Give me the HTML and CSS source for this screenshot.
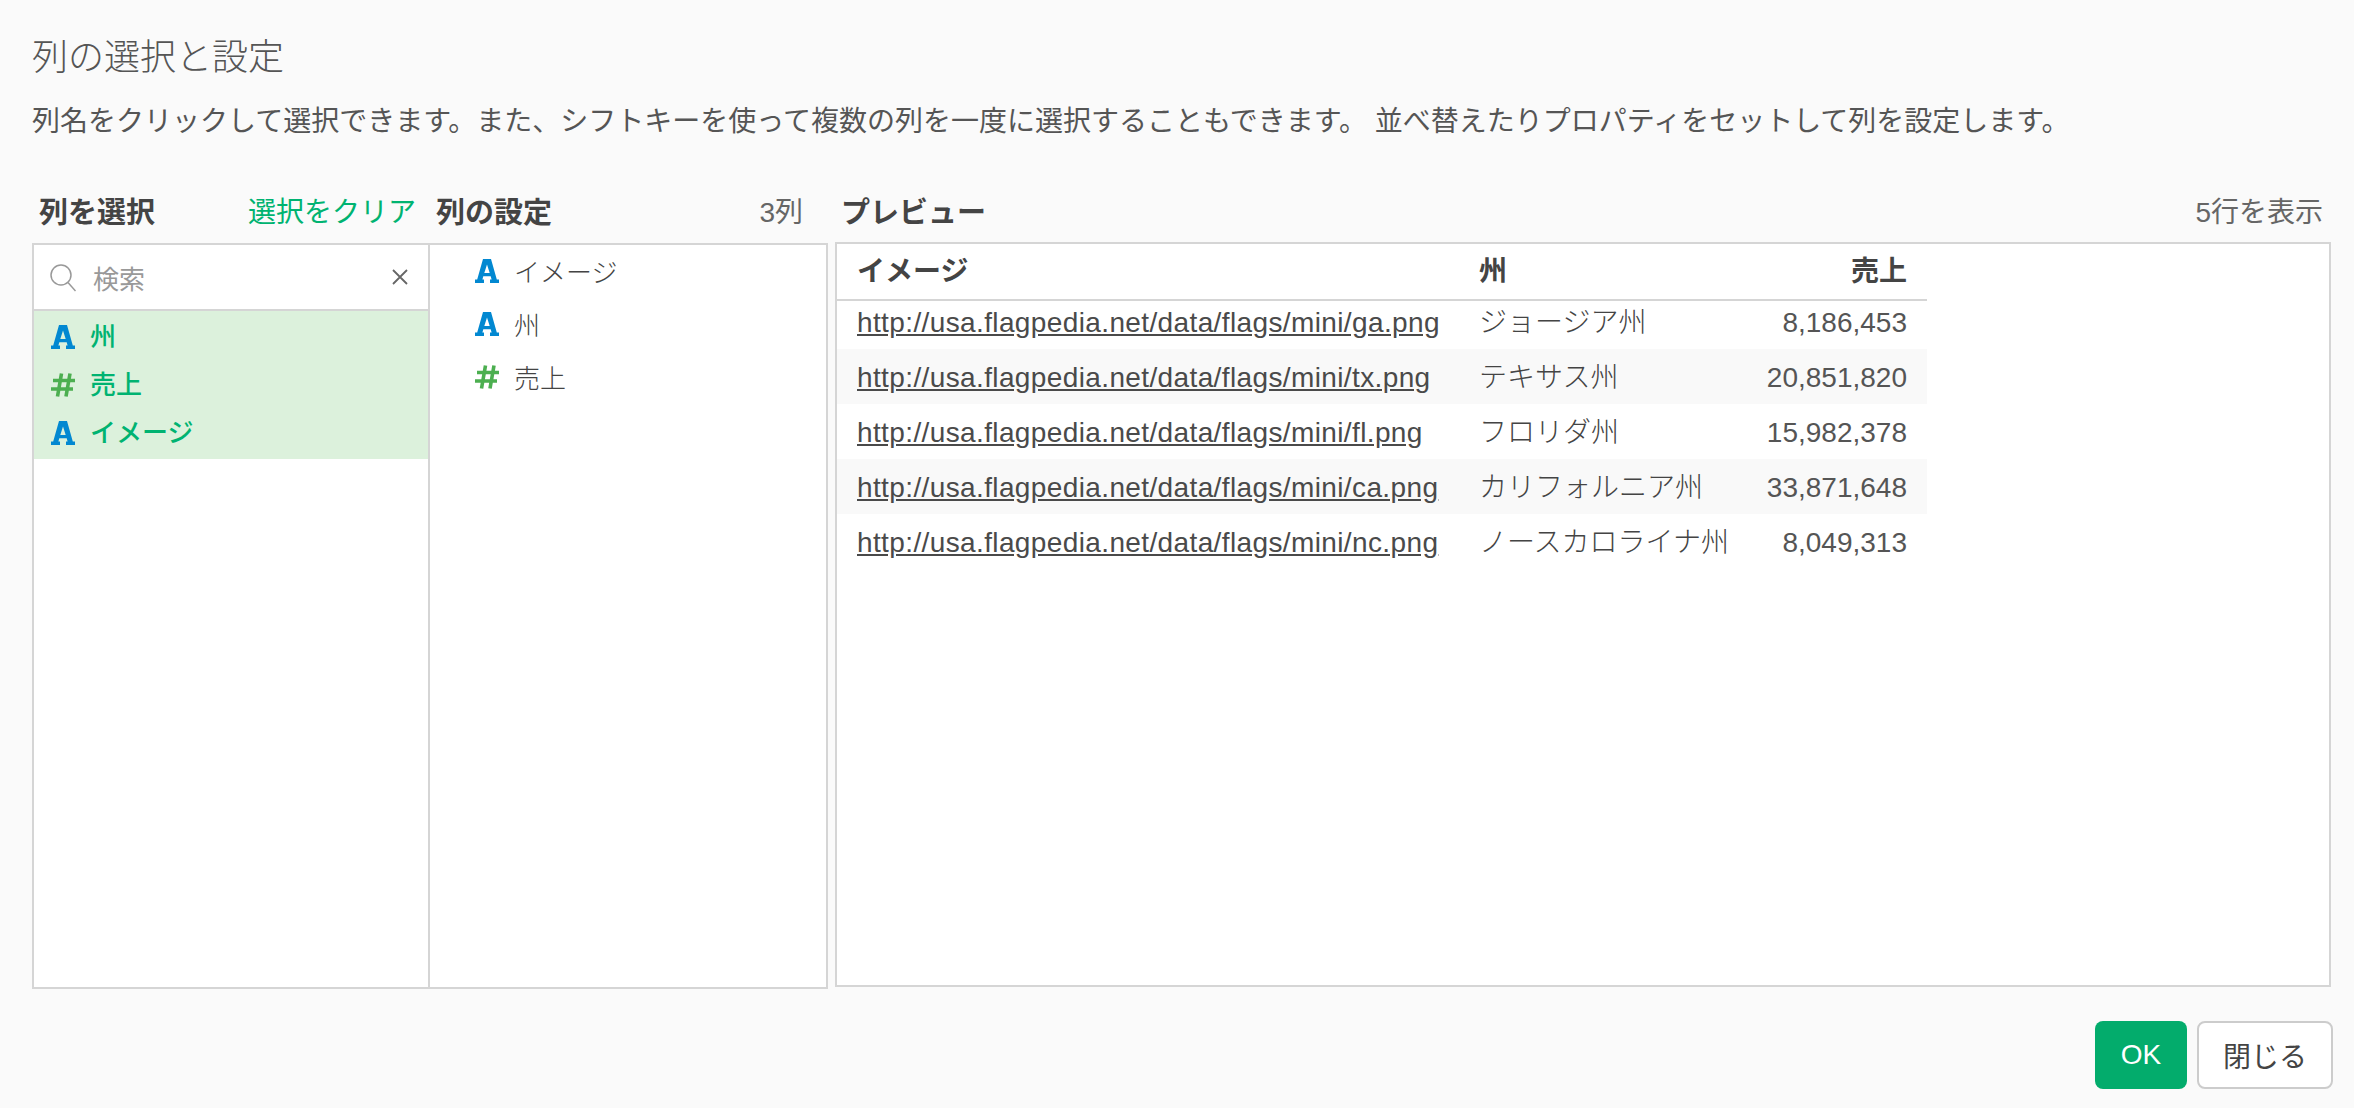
FILE: index.html
```html
<!DOCTYPE html>
<html lang="ja">
<head>
<meta charset="utf-8">
<title>列の選択と設定</title>
<link rel="stylesheet" href="styles.css">
</head>
<body>
<svg class="defs" width="0" height="0" aria-hidden="true">
  <symbol id="i-a" viewBox="0 0 24 24"><path fill="#0288d1" fill-rule="evenodd" d="M8 0h8l5.800 20.500H24V24h-9v-3.500h1.600l-.9-3.300H8.300l-.9 3.300H9V24H0v-3.500h2.200L8 0zM12 5.500 9.300 14h5.400L12 5.500z"/></symbol>
  <symbol id="i-n" viewBox="0 0 24 24"><path fill="none" stroke="#4caf50" stroke-width="3.600" d="M10.500 0.500 6.500 23.500M19 0.500l-4 23M2 7.500H24M0 16H22"/></symbol>
</svg>
<main class="dialog">
  <h1 class="title">列の選択と設定</h1>
  <p class="desc">列名をクリックして選択できます。また、シフトキーを使って複数の列を一度に選択することもできます。 並べ替えたりプロパティをセットして列を設定します。</p>
  <div class="columns">
    <section class="col-left">
      <header class="heads">
        <div class="head head-a"><strong>列を選択</strong><a class="clear">選択をクリア</a></div>
        <div class="head head-b"><strong>列の設定</strong><span>3列</span></div>
      </header>
      <div class="lists">
        <div class="pick">
          <div class="search">
            <svg class="glass" viewBox="0 0 26 28" width="26" height="28"><circle cx="11" cy="11" r="10" fill="none" stroke="#999" stroke-width="1.500"/><path d="m18 18.500 7.500 8.500" fill="none" stroke="#999" stroke-width="1.500"/></svg>
            <span class="ph">検索</span>
            <svg class="x" viewBox="0 0 16 16" width="16" height="16"><path d="M1 1l14 14M15 1 1 15" stroke="#666" stroke-width="1.800" fill="none"/></svg>
          </div>
          <ul class="sel">
            <li><svg class="ic"><use href="#i-a"/></svg><b>州</b></li>
            <li><svg class="ic"><use href="#i-n"/></svg><b>売上</b></li>
            <li><svg class="ic"><use href="#i-a"/></svg><b>イメージ</b></li>
          </ul>
        </div>
        <ul class="conf">
          <li><svg class="ic"><use href="#i-a"/></svg>イメージ</li>
          <li><svg class="ic"><use href="#i-a"/></svg>州</li>
          <li><svg class="ic"><use href="#i-n"/></svg>売上</li>
        </ul>
      </div>
    </section>
    <section class="col-right">
      <header class="head head-c"><strong>プレビュー</strong><span>5行を表示</span></header>
      <div class="preview">
        <table>
          <thead><tr><th>イメージ</th><th>州</th><th class="num">売上</th></tr></thead>
          <tbody>
            <tr><td><a>http://usa.flagpedia.net/data/flags/mini/ga.png</a></td><td>ジョージア州</td><td class="num">8,186,453</td></tr>
            <tr><td><a>http://usa.flagpedia.net/data/flags/mini/tx.png</a></td><td>テキサス州</td><td class="num">20,851,820</td></tr>
            <tr><td><a>http://usa.flagpedia.net/data/flags/mini/fl.png</a></td><td>フロリダ州</td><td class="num">15,982,378</td></tr>
            <tr><td><a>http://usa.flagpedia.net/data/flags/mini/ca.png</a></td><td>カリフォルニア州</td><td class="num">33,871,648</td></tr>
            <tr><td><a>http://usa.flagpedia.net/data/flags/mini/nc.png</a></td><td>ノースカロライナ州</td><td class="num">8,049,313</td></tr>
          </tbody>
        </table>
      </div>
    </section>
  </div>
  <footer class="foot"><button class="ok">OK</button><button class="close">閉じる</button></footer>
</main>
</body>
</html>
```
FILE: styles.css
```css
* { box-sizing: border-box; }
html, body { margin: 0; height: 100%; }
body {
  background: #fafafa;
  color: #444;
  font-family: "Liberation Sans", "Noto Sans CJK JP", sans-serif;
  font-size: 28px;
  overflow: hidden;
}
.defs { position: absolute; }
.dialog { padding: 33px 22px 0 32px; width: 2354px; height: 1108px; }
.title { margin: 0; font-weight: 300; font-size: 36px; line-height: 50px; color: #555; }
.desc { margin: 19px 0 0; font-size: 28px; line-height: 40px; color: #555; white-space: nowrap; }
.columns { display: grid; grid-template-columns: 796px 1496px; column-gap: 7px; margin-top: 41px; }
.heads { display: grid; grid-template-columns: 398px 398px; }
.head { display: flex; justify-content: space-between; align-items: center; height: 60px; padding-bottom: 7px; }
.head strong { font-weight: 700; font-size: 29px; color: #444; }
.head span { color: #666; }
.head-a { padding-left: 7px; padding-right: 14px; }
.head-b { padding-left: 6px; padding-right: 25px; }
.head-c { padding-left: 6px; padding-right: 8px; height: 59px; padding-bottom: 6px; }
.clear { color: #00b371; }
.lists { display: grid; grid-template-columns: 396px 1fr; height: 746px; border: 2px solid #d5d5d5; background: #fff; font-size: 26px; }
.pick { border-right: 2px solid #d5d5d5; }
.search { display: flex; align-items: center; height: 66px; padding: 0 20px 0 17px; border-bottom: 2px solid #d5d5d5; }
.glass { margin-top: 2px; margin-left: -1px; }
.ph { color: #999; margin-left: 17px; flex: 1; }
ul { list-style: none; margin: 0; padding: 0; }
.sel { background: #dcf1dc; height: 148px; }
.sel li { display: flex; align-items: center; height: 48px; padding-left: 17px; color: #00b371; }
.sel b { font-weight: 500; margin-top: -2px; }
.ic { width: 24px; height: 24px; margin-right: 15px; flex: none; }
.sel .ic { margin-top: 3px; }
.conf { margin-top: -1px; }
.conf li { display: flex; align-items: center; height: 53px; padding-left: 45px; color: #444; font-weight: 300; }
.preview { height: 745px; border: 2px solid #d5d5d5; background: #fff; }
table { border-collapse: collapse; table-layout: fixed; width: 1090px; }
th, td { padding: 0 20px; text-align: left; white-space: nowrap; line-height: 36px; }
th:first-child { width: 635px; }
th:nth-child(2) { width: 240px; }
th { height: 56px; font-weight: 700; border-bottom: 2px solid #d5d5d5; color: #444; }
td { height: 55px; color: #555; font-weight: 300; padding-top: 3px; }
tbody tr:first-child td { height: 49px; padding-top: 0; padding-bottom: 4px; }
tbody tr:nth-child(even) { background: #f9f9f9; }
th:nth-child(2), td:nth-child(2) { padding-left: 7px; padding-right: 0; }
td:nth-child(2) { color: #444; }
.num { text-align: right; }
td a { color: #4a4a4a; text-decoration: underline; letter-spacing: .38px; }
.foot { display: flex; justify-content: flex-end; gap: 10px; margin-top: 32px; margin-right: -1px; }
button { font: inherit; height: 68px; border-radius: 8px; }
.ok { width: 92px; background: #03ac6c; border: 0; color: #fff; }
.close { width: 136px; background: #fff; border: 2px solid #ccc; color: #444; }
```
